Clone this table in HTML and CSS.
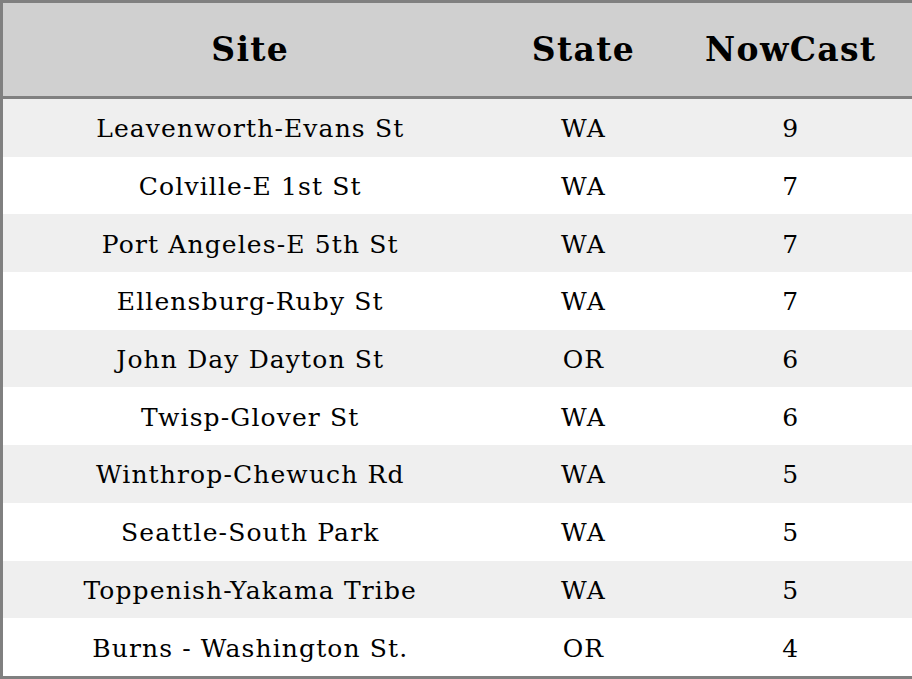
FILE: index.html
```html
<!DOCTYPE html>
<html>
<head>
<meta charset="utf-8">
<link rel="stylesheet" href="styles.css">
</head>
<body>
<table class="aq">
  <colgroup>
    <col class="c-site">
    <col class="c-state">
    <col class="c-now">
  </colgroup>
  <thead>
    <tr><th>Site</th><th>State</th><th>NowCast</th></tr>
  </thead>
  <tbody>
    <tr><td>Leavenworth-Evans St</td><td>WA</td><td>9</td></tr>
    <tr><td>Colville-E 1st St</td><td>WA</td><td>7</td></tr>
    <tr><td>Port Angeles-E 5th St</td><td>WA</td><td>7</td></tr>
    <tr><td>Ellensburg-Ruby St</td><td>WA</td><td>7</td></tr>
    <tr><td>John Day Dayton St</td><td>OR</td><td>6</td></tr>
    <tr><td>Twisp-Glover St</td><td>WA</td><td>6</td></tr>
    <tr><td>Winthrop-Chewuch Rd</td><td>WA</td><td>5</td></tr>
    <tr><td>Seattle-South Park</td><td>WA</td><td>5</td></tr>
    <tr><td>Toppenish-Yakama Tribe</td><td>WA</td><td>5</td></tr>
    <tr><td>Burns - Washington St.</td><td>OR</td><td>4</td></tr>
  </tbody>
</table>
</body>
</html>
```
FILE: styles.css
```css
html, body {
  margin: 0;
  padding: 0;
  background: #ffffff;
}
.aq {
  width: 912px;
  border-collapse: collapse;
  border: 3px solid #808080;
  font-family: "DejaVu Serif", serif;
  color: #000;
  table-layout: fixed;
}
.c-site { width: 496px; }
.c-state { width: 172px; }
.c-now { width: 244px; }
.aq th {
  background: #d0d0d0;
  font-size: 33px;
  letter-spacing: 0.04em;
  font-weight: bold;
  height: 93px;
  padding: 0;
  text-align: center;
  vertical-align: middle;
  border-bottom: 3px solid #808080;
}
.aq td {
  font-size: 25px;
  letter-spacing: 0.045em;
  height: 55.7px;
  padding: 2px 0 0 0;
  text-align: center;
  vertical-align: middle;
}
.aq tbody tr:nth-child(odd) td {
  background: #efefef;
}
```
